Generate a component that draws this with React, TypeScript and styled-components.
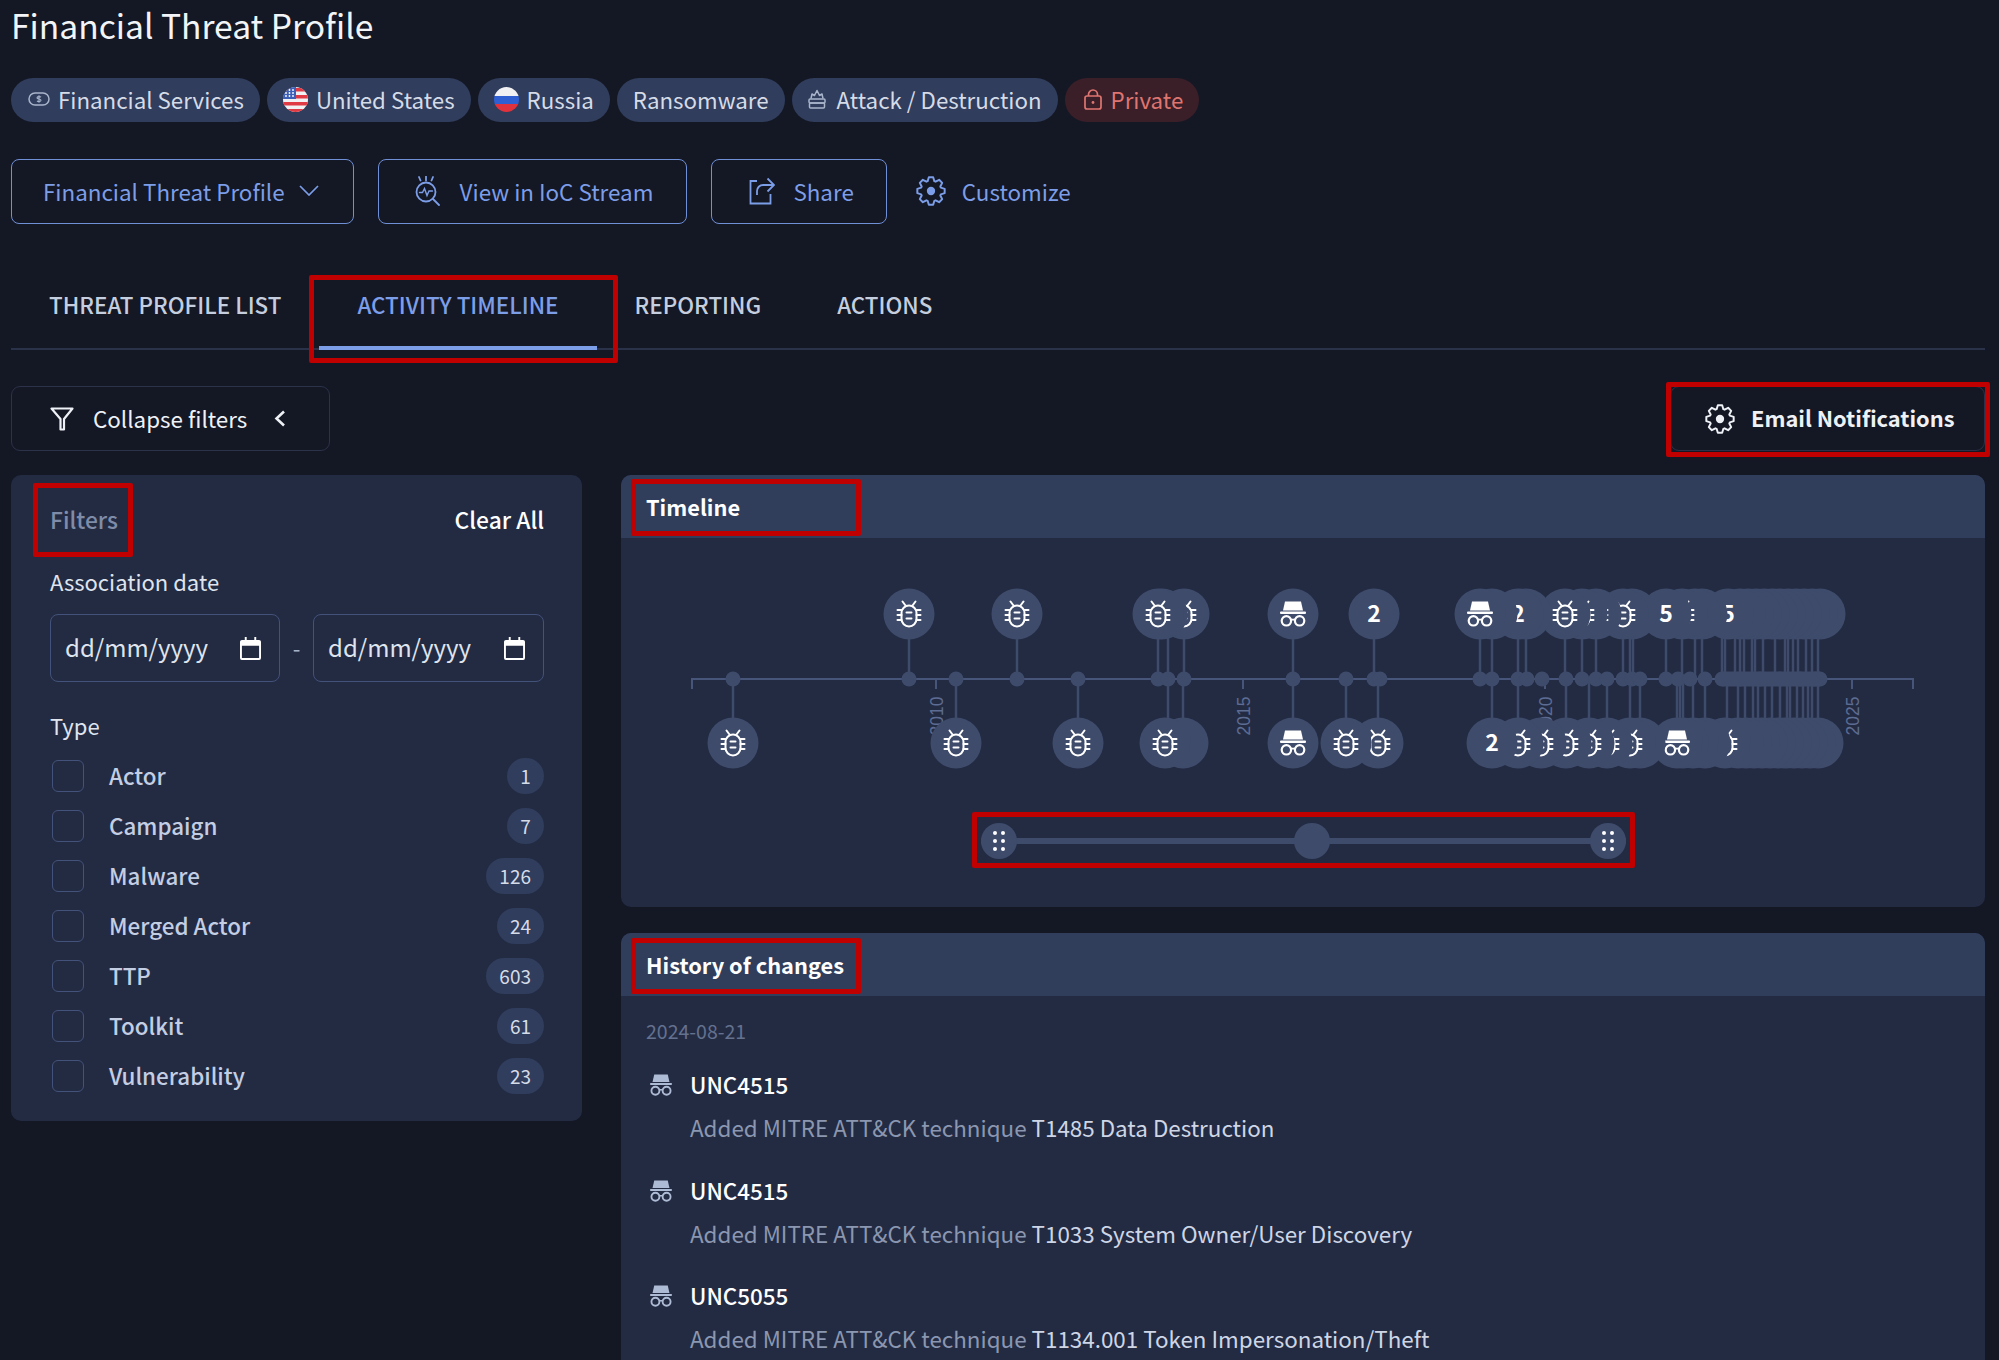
import React from "react";
import styled, { createGlobalStyle } from "styled-components";

const GlobalStyle = createGlobalStyle`
  html, body {
    margin: 0;
    height: 1360px;
    overflow: hidden;
    background: #141724;
  }
  * {
    box-sizing: border-box;
  }
  body {
    font-family: "Noto Sans CJK SC", "Noto Sans", sans-serif;
    color: #fff;
  }
`;

const Page = styled.div`
  padding: 0 14px 0 11px;
  height: 1360px;
  overflow: hidden;
`;

const Title = styled.h1`
  margin: 0;
  height: 50px;
  font-size: 33.6px;
  line-height: 50px;
  font-weight: 400;
  color: #f2f4f8;
`;

const ChipRow = styled.div`
  display: flex;
  gap: 7px;
  margin-top: 28px;
`;

const Chip = styled.div<{ $danger?: boolean }>`
  display: flex;
  align-items: center;
  gap: 8px;
  height: 44px;
  padding: 0 16px 2px;
  border-radius: 22px;
  font-size: 22.3px;
  background: ${(p) => (p.$danger ? "#3a1f28" : "#303d5c")};
  color: ${(p) => (p.$danger ? "#df7570" : "#d5dbe7")};
`;

const ButtonRow = styled.div`
  display: flex;
  align-items: center;
  gap: 24px;
  margin-top: 37px;
`;

const OutlineButton = styled.div<{ $pad: string; $gap: number }>`
  display: flex;
  align-items: center;
  gap: ${(p) => p.$gap}px;
  height: 65px;
  padding: ${(p) => p.$pad};
  border: 1.5px solid #6f8fd6;
  border-radius: 8px;
  font-size: 22.4px;
  color: #7c9ee8;
`;

const LinkButton = styled.div`
  display: flex;
  align-items: center;
  gap: 16px;
  margin-left: 5px;
  padding-bottom: 1px;
  font-size: 22.4px;
  color: #7c9ee8;
`;

const TabBar = styled.div`
  display: flex;
  height: 88px;
  margin-top: 38px;
  border-bottom: 2px solid #2a3249;
`;

const Tab = styled.div<{ $active?: boolean }>`
  position: relative;
  display: flex;
  align-items: center;
  padding: 0 38px 1px;
  margin-bottom: -2px;
  font-size: 22.4px;
  font-weight: 500;
  color: ${(p) => (p.$active ? "#7c9ee8" : "#c4cedf")};
  border-bottom: 4px solid ${(p) => (p.$active ? "#7c9ee8" : "transparent")};
`;

const Toolbar = styled.div`
  display: flex;
  justify-content: space-between;
  margin-top: 36px;
`;

const GhostButton = styled.div<{ $width: number; $pad: number; $strong?: boolean }>`
  position: relative;
  display: flex;
  align-items: center;
  gap: ${(p) => (p.$strong ? 16 : 19)}px;
  width: ${(p) => p.$width}px;
  height: 65px;
  padding-left: ${(p) => p.$pad}px;
  border: 1.5px solid #2b3249;
  border-radius: 9px;
  font-size: ${(p) => (p.$strong ? 21.8 : 22.4)}px;
  font-weight: ${(p) => (p.$strong ? 600 : 400)};
  color: #eef1f6;
`;

const ButtonLabel = styled.span<{ $after?: number }>`
  margin-right: ${(p) => p.$after ?? 0}px;
  padding-bottom: 2px;
`;

const Content = styled.div`
  display: grid;
  grid-template-columns: 571px 1fr;
  gap: 39px;
  margin-top: 24px;
  align-items: start;
`;

const FilterPanel = styled.section`
  height: 646px;
  padding: 26px 38px 20px 39px;
  background: #232b43;
  border-radius: 10px;
`;

const FilterHead = styled.div`
  position: relative;
  display: flex;
  justify-content: space-between;
  align-items: center;
  height: 36px;
  font-size: 22.8px;
  font-weight: 500;
`;

const FilterTitle = styled.span`
  color: #7f8ca8;
`;

const FieldLabel = styled.div<{ $top: number }>`
  height: 30px;
  margin-top: ${(p) => p.$top}px;
  font-size: 22px;
  line-height: 26px;
  color: #dfe4ee;
`;

const DateRow = styled.div`
  display: grid;
  grid-template-columns: 230px 1fr 231px;
  align-items: center;
  margin-top: 16px;
`;

const DateInput = styled.div`
  display: flex;
  align-items: center;
  justify-content: space-between;
  height: 68px;
  padding: 0 18px 0 14px;
  border: 1.5px solid #43527a;
  border-radius: 8px;
  font-size: 24px;
  color: #dfe4ee;
`;

const DateText = styled.span`
  padding-bottom: 4px;
`;

const Dash = styled.span`
  text-align: center;
  padding-bottom: 3px;
  font-size: 22px;
  color: #a7b2c9;
`;

const TypeList = styled.div`
  margin-top: 9px;
`;

const TypeRow = styled.div`
  display: flex;
  align-items: center;
  height: 50px;
  padding-left: 2px;
`;

const Checkbox = styled.span`
  flex: none;
  width: 32px;
  height: 32px;
  border: 1.5px solid #43527a;
  border-radius: 6px;
`;

const TypeName = styled.span`
  flex: 1;
  margin-left: 25px;
  padding-bottom: 3px;
  font-size: 22.4px;
  font-weight: 500;
  color: #c3cee3;
`;

const CountBadge = styled.span`
  display: flex;
  align-items: center;
  justify-content: center;
  min-width: 37px;
  height: 36px;
  padding: 0 13px 2px;
  border-radius: 18px;
  background: #303d5c;
  font-size: 19px;
  color: #d5dbe7;
`;

const Column = styled.div`
  display: flex;
  flex-direction: column;
  gap: 26px;
`;

const Card = styled.section<{ $height: number }>`
  background: #232b43;
  border-radius: 10px;
  height: ${(p) => p.$height}px;
`;

const CardHead = styled.div`
  position: relative;
  display: flex;
  align-items: center;
  height: 63px;
  padding: 0 0 1px 25px;
  background: #303e5c;
  border-radius: 10px 10px 0 0;
  font-size: 21.8px;
  font-weight: 600;
`;

const ChartSvg = styled.svg`
  display: block;
  width: 100%;
  height: 262px;
`;

const SliderRow = styled.div`
  position: relative;
  display: flex;
  align-items: center;
  justify-content: space-between;
  width: 645px;
  height: 36px;
  margin: 23px auto 0;
  &::before {
    content: "";
    position: absolute;
    left: 0;
    right: 0;
    top: 15px;
    height: 6px;
    background: #3e4b6b;
  }
`;

const SliderKnob = styled.span<{ $shift?: number }>`
  position: relative;
  display: flex;
  align-items: center;
  justify-content: center;
  width: 36px;
  height: 36px;
  margin-left: ${(p) => p.$shift ?? 0}px;
  border-radius: 50%;
  background: #3e4b6b;
`;

const HistoryBody = styled.div`
  padding: 21px 25px 0;
`;

const HistoryDate = styled.div`
  height: 28px;
  font-size: 19.5px;
  line-height: 28px;
  color: #64718f;
`;

const HistoryItem = styled.div`
  display: grid;
  grid-template-columns: 44px 1fr;
  row-gap: 13px;
  margin-top: 25px;
  & + & {
    margin-top: 32.5px;
  }
`;

const HistoryIcon = styled.svg`
  display: block;
  width: 22px;
  height: 22px;
  margin: 4px 0 0 4px;
  color: #aebbd4;
`;

const HistoryName = styled.div`
  height: 30px;
  font-size: 22.4px;
  line-height: 28px;
  font-weight: 500;
`;

const HistoryText = styled.div`
  grid-column: 2;
  height: 30px;
  font-size: 22.4px;
  line-height: 28px;
  white-space: nowrap;
  color: #8b97b0;
  b {
    font-weight: 400;
    color: #ced6e6;
  }
`;

// red annotation frames that sit on top of the screenshot
const Mark = styled.span<{ $inset: string; $width?: number }>`
  position: absolute;
  inset: ${(p) => p.$inset};
  width: ${(p) => (p.$width ? `${p.$width}px` : "auto")};
  border: 5px solid #c00000;
  border-radius: 2px;
  pointer-events: none;
`;

const FlexIcon = styled.svg<{ $before?: number; $after?: number }>`
  display: block;
  flex: none;
  margin-left: ${(p) => p.$before ?? 0}px;
  margin-right: ${(p) => p.$after ?? 0}px;
`;

const gearPath = (() => {
  const pts: string[] = [];
  for (let i = 0; i < 8; i++) {
    const a = (i * Math.PI) / 4;
    const step = Math.PI / 4;
    [
      [-0.42, 9],
      [-0.2, 12],
      [0.2, 12],
      [0.42, 9],
    ].forEach(([o, r]) => {
      const t = a + o * step;
      pts.push(`${(13 + r * Math.sin(t)).toFixed(2)} ${(13 - r * Math.cos(t)).toFixed(2)}`);
    });
  }
  return `M${pts.join("L")}Z`;
})();

const GearIcon = ({ size = 30 }: { size?: number }) => (
  <FlexIcon width={size} height={size} viewBox="0 0 26 26" fill="none" stroke="currentColor" strokeWidth="1.7" strokeLinejoin="round">
    <path d={gearPath} />
    <circle cx="13" cy="13" r="3.6" fill="currentColor" stroke="none" />
  </FlexIcon>
);

const BugGlyph = ({ x = 0, y = 0 }: { x?: number; y?: number }) => (
  <g transform={`translate(${x} ${y})`} fill="none" stroke="#fff" strokeWidth="2" strokeLinecap="round">
    <rect x="-7.5" y="-8.5" width="15" height="21" rx="7.5" />
    <path d="M-3.5 -8.5L-6.5 -12.5M3.5 -8.5L6.5 -12.5" />
    <path d="M-7.5 -4H-11.5M-7.5 1H-11.5M-7.5 6H-11.5M7.5 -4H11.5M7.5 1H11.5M7.5 6H11.5" />
    <path d="M-2.5 -1.5H2.5M-2.5 4.5H2.5" />
  </g>
);

const HatGlyph = ({ x = 0, y = 0 }: { x?: number; y?: number }) => (
  <g transform={`translate(${x} ${y})`}>
    <path d="M-8 -12.5H8L10 -3.5H-10Z" fill="currentColor" />
    <rect x="-13" y="-2.5" width="26" height="2.4" rx="1" fill="currentColor" />
    <circle cx="-6.6" cy="6.8" r="4.7" fill="none" stroke="currentColor" strokeWidth="2.2" />
    <circle cx="6.6" cy="6.8" r="4.7" fill="none" stroke="currentColor" strokeWidth="2.2" />
    <path d="M-2.2 5.6H2.2" stroke="currentColor" strokeWidth="1.8" />
  </g>
);

type Bubble = [number, "bug" | "hat" | string | null];

const emptyRun = (from: number, to: number, step: number): Bubble[] => {
  const out: Bubble[] = [];
  for (let x = from; x <= to; x += step) out.push([x, null]);
  return out;
};

const topBubbles: Bubble[] = [
  [909, "bug"], [1017, "bug"], [1158, "bug"], [1162, null], [1184, "bug"], [1293, "hat"], [1374, "2"],
  [1480, "hat"], [1492, null], [1518, "2"], [1526, null],
  [1565, "bug"], [1582, "bug"], [1596, "bug"], [1623, "bug"], [1632, null],
  [1666, "5"], [1682, "bug"], [1695, null], [1702, null], [1728, "5"],
  ...emptyRun(1740, 1820, 8),
];

const bottomBubbles: Bubble[] = [
  [733, "bug"], [956, "bug"], [1078, "bug"], [1165, "bug"], [1183, null], [1293, "hat"], [1346, "bug"], [1378, "bug"],
  [1492, "2"], [1518, "bug"], [1541, "bug"], [1566, "bug"], [1589, "bug"], [1607, "bug"], [1630, "bug"], [1640, null],
  [1677, "hat"], [1683, null], [1693, null], [1705, null], [1725, "bug"],
  ...emptyRun(1738, 1818, 8),
];

const topStems = [
  909, 1017, 1158, 1168, 1184, 1293, 1374, 1480, 1492, 1518, 1526, 1565, 1582, 1596, 1623, 1630, 1633, 1666, 1682, 1695, 1702,
  1722, 1725, 1735, 1740, 1744, 1752, 1755, 1763, 1775, 1785, 1788, 1793, 1798, 1806, 1812, 1818,
];

const bottomStems = [
  733, 956, 1078, 1168, 1183, 1293, 1346, 1378, 1492, 1518, 1566, 1589, 1607, 1630, 1640, 1677, 1680, 1683, 1693, 1705,
  1727, 1738, 1745, 1753, 1758, 1765, 1772, 1780, 1787, 1790, 1797, 1803, 1808, 1812, 1818,
];

const axisDots = [
  733, 909, 956, 1017, 1078, 1158, 1168, 1184, 1293, 1346, 1374, 1380,
  1480, 1492, 1518, 1527, 1542, 1566, 1582, 1596, 1607, 1623, 1632, 1640, 1666, 1678, 1690, 1705,
  1722, 1740, 1760, 1780, 1800, 1815, 1820,
];

const years = [
  [936, "2010"],
  [1243, "2015"],
  [1545, "2020"],
  [1852, "2025"],
] as const;

const BubbleNode = ({ x, y, kind }: { x: number; y: number; kind: Bubble[1] }) => (
  <g color="#fff">
    <circle cx={x} cy={y} r={25.5} fill="#3e4b6b" />
    {kind === "bug" && <BugGlyph x={x} y={y} />}
    {kind === "hat" && <HatGlyph x={x} y={y} />}
    {kind && kind !== "bug" && kind !== "hat" && (
      <text x={x} y={y + 8} textAnchor="middle" fontSize="23" fontWeight="700" fill="#fff">
        {kind}
      </text>
    )}
  </g>
);

const TimelineChart = () => (
  <ChartSvg viewBox="621 538 1364 262">
    <path d="M692 689V679H1913V689" fill="none" stroke="#47557a" strokeWidth="2" />
    {years.map(([x, label]) => (
      <g key={label}>
        <path d={`M${x} 679V689`} stroke="#47557a" strokeWidth="2" />
        <text
          transform={`translate(${x + 7} 716) rotate(-90)`}
          textAnchor="middle"
          fontFamily="Liberation Sans, sans-serif"
          fontSize="17.5"
          fill="#5d6c92"
        >
          {label}
        </text>
      </g>
    ))}
    {topStems.map((x) => (
      <path key={x} d={`M${x} 630V679`} stroke="#3e4b6b" strokeWidth="2.5" />
    ))}
    {bottomStems.map((x) => (
      <path key={x} d={`M${x} 679V730`} stroke="#3e4b6b" strokeWidth="2.5" />
    ))}
    {axisDots.map((x) => (
      <circle key={x} cx={x} cy={679} r={7.5} fill="#3e4b6b" />
    ))}
    <path d="M1722 679H1820" stroke="#3e4b6b" strokeWidth="15" />
    {/* earlier points sit on top of later ones */}
    {[...topBubbles].reverse().map(([x, kind]) => (
      <BubbleNode key={x} x={x} y={614} kind={kind} />
    ))}
    {[...bottomBubbles].reverse().map(([x, kind]) => (
      <BubbleNode key={x} x={x} y={743} kind={kind} />
    ))}
  </ChartSvg>
);

const GripDots = () => (
  <svg width="12" height="20" viewBox="0 0 12 20" fill="#fff">
    {[2, 10, 18].map((cy) => (
      <g key={cy}>
        <circle cx="2" cy={cy} r="2" />
        <circle cx="10" cy={cy} r="2" />
      </g>
    ))}
  </svg>
);

const CalendarIcon = () => (
  <FlexIcon width="21" height="23" viewBox="0 0 22 24">
    <path d="M5 0h2v3h8V0h2v3h3a2 2 0 0 1 2 2v17a2 2 0 0 1-2 2H2a2 2 0 0 1-2-2V5a2 2 0 0 1 2-2h3z M2 9v13h18V9z" fill="#fff" fillRule="evenodd" />
  </FlexIcon>
);

const CashIcon = () => (
  <FlexIcon $before={1} width="22" height="14" viewBox="0 0 22 14" fill="none" stroke="#a9b5cb" strokeWidth="1.5">
    <rect x="1" y="1" width="20" height="12" rx="6" />
    <path d="M13 5.2c-.8-.9-4-.9-4 .7s4 .7 4 2.3-3.2 1.5-4 .6M11 3.2v7.6" strokeWidth="1.1" />
  </FlexIcon>
);

const UsFlag = () => (
  <FlexIcon width="25" height="25" viewBox="0 0 25 25">
    <defs>
      <clipPath id="us-clip">
        <circle cx="12.5" cy="12.5" r="12.5" />
      </clipPath>
    </defs>
    <g clipPath="url(#us-clip)">
      <rect width="25" height="25" fill="#f1f1f4" />
      {[0, 7, 14, 21].map((y) => (
        <rect key={y} y={y + 1} width="25" height="3.5" fill="#e03a45" />
      ))}
      <rect width="13" height="12" fill="#3c5fb8" />
      {[3, 6, 9].map((y) =>
        [3, 6.5, 10].map((x) => <circle key={`${x}-${y}`} cx={x} cy={y} r="0.9" fill="#fff" />),
      )}
    </g>
  </FlexIcon>
);

const RuFlag = () => (
  <FlexIcon width="25" height="25" viewBox="0 0 25 25">
    <defs>
      <clipPath id="ru-clip">
        <circle cx="12.5" cy="12.5" r="12.5" />
      </clipPath>
    </defs>
    <g clipPath="url(#ru-clip)">
      <rect width="25" height="9" fill="#f1f1f4" />
      <rect y="9" width="25" height="8" fill="#2f5fd0" />
      <rect y="17" width="25" height="8" fill="#e0323c" />
    </g>
  </FlexIcon>
);

const AttackIcon = () => (
  <FlexIcon $after={3} width="18" height="20" viewBox="0 0 18 20" fill="none" stroke="#a9b5cb" strokeWidth="1.5" strokeLinejoin="round">
    <path d="M3 9.5L4 5l2.5 1.5L9 1.5l2.5 5L14 5l1 4.5" />
    <rect x="1" y="10" width="16" height="4" rx="1" />
    <rect x="1.5" y="14" width="15" height="5" rx="1" />
  </FlexIcon>
);

const LockIcon = () => (
  <FlexIcon $before={3} $after={1} width="18" height="21" viewBox="0 0 18 21" fill="none" stroke="#df7570" strokeWidth="1.7">
    <rect x="1" y="7" width="16" height="13" rx="2" />
    <path d="M4.5 7V5.5a4.5 4.5 0 0 1 9 0V7" />
    <circle cx="9" cy="13.5" r="1.4" fill="#df7570" stroke="none" />
  </FlexIcon>
);

const ChevronDownIcon = () => (
  <FlexIcon width="20" height="11" viewBox="0 0 20 11" fill="none" stroke="currentColor" strokeWidth="1.7">
    <path d="M1 1l9 9 9-9" />
  </FlexIcon>
);

const ChevronLeftIcon = () => (
  <FlexIcon width="12" height="17" viewBox="0 0 12 17" fill="none" stroke="#eef1f6" strokeWidth="2.6">
    <path d="M10 1.5L2.5 8.5l7.5 7" />
  </FlexIcon>
);

const FunnelIcon = () => (
  <FlexIcon width="24" height="24" viewBox="0 0 24 24" fill="none" stroke="#eef1f6" strokeWidth="2.2" strokeLinejoin="round">
    <path d="M1.5 1.5h21L14 12v10.5h-3.5V12z" />
  </FlexIcon>
);

const StreamIcon = () => (
  <FlexIcon width="26" height="30" viewBox="0 0 26 30" fill="none" stroke="currentColor" strokeWidth="1.8" strokeLinecap="round">
    <path d="M5 1l1.5 3.5M12 .5v4M19 1l-1.5 3.5" />
    <circle cx="12" cy="16" r="9.5" />
    <path d="M5.5 16.5h3l2-4 2.5 7 2-4.5h3.5" strokeWidth="1.4" />
    <path d="M19 23l6 6" />
  </FlexIcon>
);

const ShareIcon = () => (
  <FlexIcon width="26" height="28" viewBox="0 0 26 28" fill="none" stroke="currentColor" strokeWidth="1.8">
    <path d="M8 4H1.5v22.5h20V17" />
    <path d="M8 18v-4a6 6 0 0 1 6-6h10" />
    <path d="M18.5 1.5L25 8l-6.5 6.5" />
  </FlexIcon>
);

const types = [
  ["Actor", "1"],
  ["Campaign", "7"],
  ["Malware", "126"],
  ["Merged Actor", "24"],
  ["TTP", "603"],
  ["Toolkit", "61"],
  ["Vulnerability", "23"],
];

const history = [
  ["UNC4515", "T1485 Data Destruction"],
  ["UNC4515", "T1033 System Owner/User Discovery"],
  ["UNC5055", "T1134.001 Token Impersonation/Theft"],
];

export default function App() {
  return (
    <Page>
      <GlobalStyle />
      <Title>Financial Threat Profile</Title>

      <ChipRow>
        <Chip>
          <CashIcon />
          Financial Services
        </Chip>
        <Chip>
          <UsFlag />
          United States
        </Chip>
        <Chip>
          <RuFlag />
          Russia
        </Chip>
        <Chip>Ransomware</Chip>
        <Chip>
          <AttackIcon />
          Attack / Destruction
        </Chip>
        <Chip $danger>
          <LockIcon />
          Private
        </Chip>
      </ChipRow>

      <ButtonRow>
        <OutlineButton $pad="0 34px 2px 31px" $gap={14}>
          Financial Threat Profile
          <ChevronDownIcon />
        </OutlineButton>
        <OutlineButton $pad="0 33px 2px 35px" $gap={20}>
          <StreamIcon />
          View in IoC Stream
        </OutlineButton>
        <OutlineButton $pad="0 32px 2px 37px" $gap={18}>
          <ShareIcon />
          Share
        </OutlineButton>
        <LinkButton>
          <GearIcon />
          Customize
        </LinkButton>
      </ButtonRow>

      <TabBar>
        <Tab>THREAT PROFILE LIST</Tab>
        <Tab $active>
          ACTIVITY TIMELINE
          <Mark $inset="13px -21px -17px -10px" />
        </Tab>
        <Tab>REPORTING</Tab>
        <Tab>ACTIONS</Tab>
      </TabBar>

      <Toolbar>
        <GhostButton $width={319} $pad={38}>
          <FunnelIcon />
          <ButtonLabel $after={8}>Collapse filters</ButtonLabel>
          <ChevronLeftIcon />
        </GhostButton>
        <GhostButton $width={315} $pad={34} $strong>
          <GearIcon />
          <ButtonLabel>Email Notifications</ButtonLabel>
          <Mark $inset="-5px -6px -7px -5px" />
        </GhostButton>
      </Toolbar>

      <Content>
        <FilterPanel>
          <FilterHead>
            <FilterTitle>Filters</FilterTitle>
            Clear All
            <Mark $inset="-18px auto -20px -17px" $width={100} />
          </FilterHead>

          <FieldLabel $top={31}>Association date</FieldLabel>
          <DateRow>
            <DateInput>
              <DateText>dd/mm/yyyy</DateText>
              <CalendarIcon />
            </DateInput>
            <Dash>-</Dash>
            <DateInput>
              <DateText>dd/mm/yyyy</DateText>
              <CalendarIcon />
            </DateInput>
          </DateRow>

          <FieldLabel $top={30}>Type</FieldLabel>
          <TypeList>
            {types.map(([name, count]) => (
              <TypeRow key={name}>
                <Checkbox />
                <TypeName>{name}</TypeName>
                <CountBadge>{count}</CountBadge>
              </TypeRow>
            ))}
          </TypeList>
        </FilterPanel>

        <Column>
          <Card $height={432}>
            <CardHead>
              Timeline
              <Mark $inset="4px auto 2px 10px" $width={230} />
            </CardHead>
            <TimelineChart />
            <SliderRow>
              <SliderKnob>
                <GripDots />
              </SliderKnob>
              <SliderKnob $shift={17} />
              <SliderKnob>
                <GripDots />
              </SliderKnob>
              <Mark $inset="-11px -9px -9px -9px" />
            </SliderRow>
          </Card>

          <Card $height={500}>
            <CardHead>
              History of changes
              <Mark $inset="5px auto 2px 10px" $width={230} />
            </CardHead>
            <HistoryBody>
              <HistoryDate>2024-08-21</HistoryDate>
              {history.map(([name, tech], i) => (
                <HistoryItem key={i}>
                  <HistoryIcon viewBox="-13 -13 26 26">
                    <HatGlyph />
                  </HistoryIcon>
                  <HistoryName>{name}</HistoryName>
                  <HistoryText>
                    Added MITRE ATT&amp;CK technique <b>{tech}</b>
                  </HistoryText>
                </HistoryItem>
              ))}
            </HistoryBody>
          </Card>
        </Column>
      </Content>
    </Page>
  );
}
